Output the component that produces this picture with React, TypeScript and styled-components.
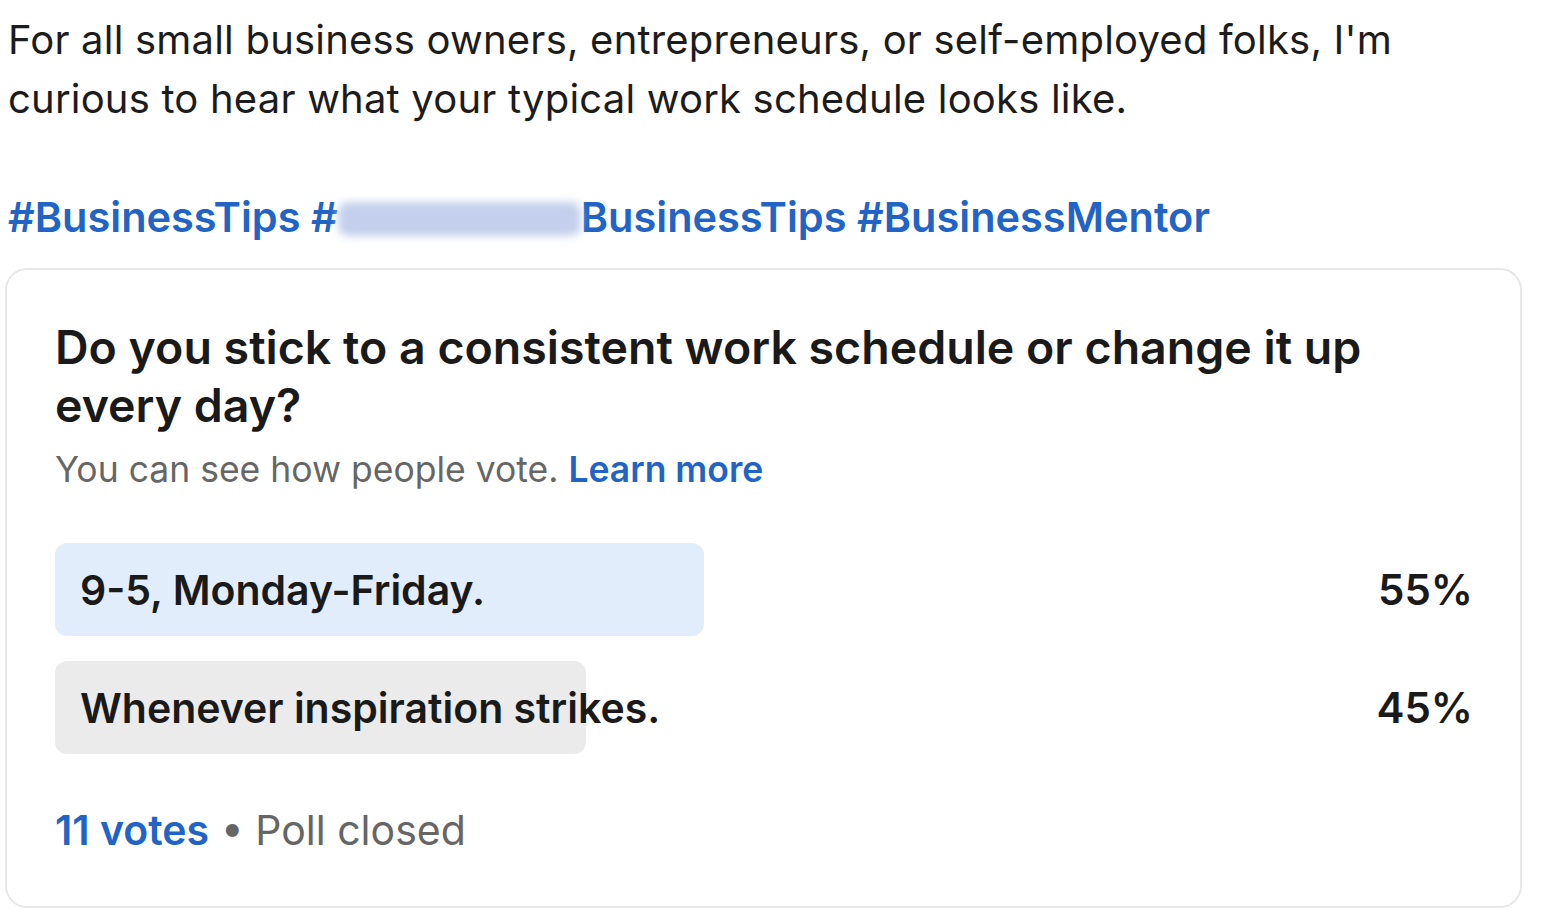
import React from 'react';
import styled, { createGlobalStyle } from 'styled-components';

const GlobalStyle = createGlobalStyle`
  body {
    margin: 0;
    background: #ffffff;
    font-family: Inter, "Liberation Sans", Arial, sans-serif;
    color: #1a1a1a;
  }
`;

const Page = styled.div`
  padding: 10px 41px 0 5px;
`;

const PostText = styled.p`
  margin: 0 0 0 3px;
  font-size: 40px;
  line-height: 59px;
  letter-spacing: 0.2px;
  color: #1c1c1c;
`;

const Hashtags = styled.p`
  margin: 60px 0 21px 3px;
  font-size: 41.5px;
  line-height: 59px;
  font-weight: 600;
  color: #2164c6;
`;

const Blurred = styled.span`
  display: inline-block;
  width: 243px;
  height: 34px;
  vertical-align: -4px;
  background: #c3cfec;
  border-radius: 10px;
  filter: blur(4px);
`;

const Card = styled.div`
  border: 2px solid #e7e7e7;
  border-radius: 22px;
  padding: 48px 47px 52px 48px;
`;

const Question = styled.h2`
  margin: 0;
  font-size: 46.5px;
  line-height: 58px;
  font-weight: 600;
  color: #1a1a1a;
`;

const Hint = styled.p`
  margin: 15px 0 0;
  font-size: 35.5px;
  line-height: 42px;
  color: #666666;
`;

const Link = styled.span`
  color: #2164c6;
  font-weight: 600;
`;

const Options = styled.div`
  margin-top: 52px;
  display: flex;
  flex-direction: column;
  gap: 25px;
`;

const OptionRow = styled.div`
  display: flex;
  align-items: center;
`;

const Track = styled.div`
  position: relative;
  flex: 1;
  height: 93px;
  display: flex;
  align-items: center;
`;

const Fill = styled.div<{ $leading: boolean }>`
  position: absolute;
  left: 0;
  top: 0;
  bottom: 0;
  border-radius: 12px;
  background: ${(p) => (p.$leading ? '#e2edfb' : '#ebebeb')};
`;

const OptionLabel = styled.span`
  position: relative;
  padding-left: 25px;
  font-size: 41px;
  font-weight: 600;
  white-space: nowrap;
  color: #1a1a1a;
`;

const Percent = styled.span`
  width: 238px;
  text-align: right;
  font-size: 42px;
  font-weight: 600;
  color: #1a1a1a;
`;

const Footer = styled.p`
  margin: 52px 0 0;
  font-size: 41px;
  line-height: 48px;
  color: #666666;
`;

const Votes = styled.span`
  color: #2164c6;
  font-weight: 600;
`;

const options = [
  { label: '9-5, Monday-Friday.', pct: 55, leading: true },
  { label: 'Whenever inspiration strikes.', pct: 45, leading: false },
];

export default function App() {
  return (
    <Page>
      <GlobalStyle />
      <PostText>
        For all small business owners, entrepreneurs, or self-employed folks, I'm curious to hear what
        your typical work schedule looks like.
      </PostText>
      <Hashtags>
        #BusinessTips #<Blurred />BusinessTips #BusinessMentor
      </Hashtags>
      <Card>
        <Question>Do you stick to a consistent work schedule or change it up every day?</Question>
        <Hint>
          You can see how people vote. <Link>Learn more</Link>
        </Hint>
        <Options>
          {options.map((o) => (
            <OptionRow key={o.label}>
              <Track>
                <Fill $leading={o.leading} style={{ width: `${o.pct}%` }} />
                <OptionLabel>{o.label}</OptionLabel>
              </Track>
              <Percent>{o.pct}%</Percent>
            </OptionRow>
          ))}
        </Options>
        <Footer>
          <Votes>11 votes</Votes> • Poll closed
        </Footer>
      </Card>
    </Page>
  );
}
